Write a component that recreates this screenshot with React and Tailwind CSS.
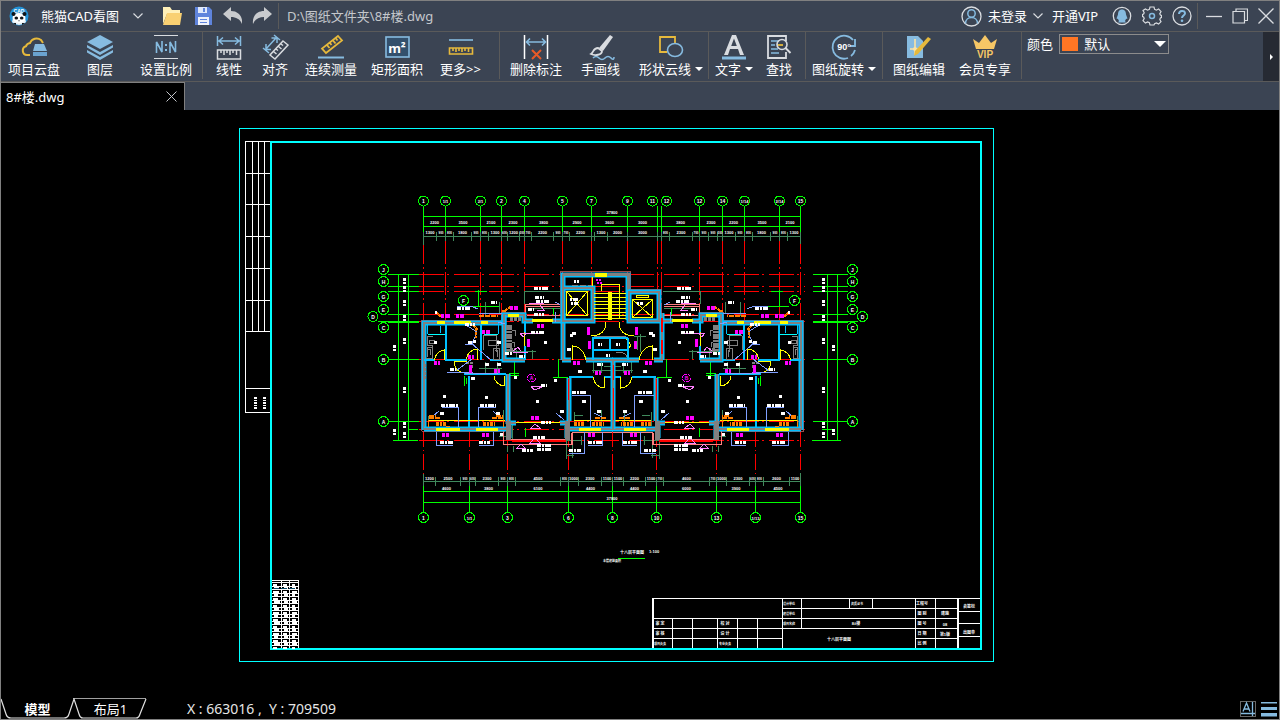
import React, { useState } from 'react';

const GREEN = '#00ff00';
const DIM = '#408a5c';
const RED = '#ff0000';
const WALL = '#00bfff';
const GRAY = '#808080';
const YELLOW = '#ffff00';
const MAGENTA = '#ff00ff';
const PURPLE = '#7f9fff';
const PINK = '#ff7fff';
const SALMON = '#ff7f7f';
const ORANGE = '#ff7f00';
const CYAN = '#00ffff';
const BLUE = '#86bbe0';
const GOLD = '#e6b93c';
const LIGHT = '#d9dce0';

// the plan is symmetric, x mirrors to AXIS - x
const AXIS = 1225;
const mirror = x => AXIS - x;

const topAxes = [
  { x: 423.5, label: '1' }, { x: 445.5, label: '1/1' }, { x: 480.5, label: '2/1' },
  { x: 501.5, label: '2' }, { x: 524.5, label: '4' }, { x: 562.5, label: '5' },
  { x: 591.5, label: '7' }, { x: 627.5, label: '9' }, { x: 657.5, cx: 652.5, label: '11' },
  { x: 661.5, cx: 666.5, label: '12' }, { x: 699.5, label: '12' }, { x: 722.5, label: '14' },
  { x: 744.5, label: '1/14' }, { x: 779.5, label: '2/14' }, { x: 800.5, label: '15' },
];

const bottomAxes = [
  { x: 423.5, label: '1' }, { x: 469.5, label: '1/1' }, { x: 507.5, label: '3' },
  { x: 568.5, label: '6' }, { x: 612.5, label: '8' }, { x: 656.5, label: '10' },
  { x: 716.5, label: '13' }, { x: 755.5, label: '1/13' }, { x: 800.5, label: '15' },
];

const sideAxes = [
  { y: 269.5, line: 274.5, label: 'J' }, { y: 281.5, line: 286.5, label: 'H' },
  { y: 296.5, line: 291.5, label: 'G' }, { y: 309.5, line: 314.5, label: 'E' },
  { y: 316.5, line: 321.5, label: 'D', out: true }, { y: 327.5, line: 322.5, label: 'C' },
  { y: 359.5, line: 359.5, label: 'B' }, { y: 421.5, line: 421.5, label: 'A' },
];

const topTicks = [423.5, 436.5, 445.5, 453.5, 471.5, 480.5, 488.5, 501.5, 507.5, 519.5, 524.5, 531.5, 553.5, 562.5, 569.5, 591.5, 594.5, 607.5, 627.5, 657.5, 661.5, 669.5, 692.5, 699.5, 708.5, 717.5, 722.5, 735.5, 744.5, 752.5, 770.5, 779.5, 787.5, 800.5];
const bottomTicks = [423.5, 435.5, 460.5, 469.5, 475.5, 498.5, 507.5, 515.5, 560.5, 568.5, 578.5, 601.5, 612.5, 623.5, 645.5, 656.5, 663.5, 709.5, 716.5, 726.5, 749.5, 755.5, 763.5, 789.5, 800.5];

const redRows = [274.5, 286.5, 291.5, 314.5, 321.5, 359.5, 421.5, 429.5, 440.5];

// short room and door labels: x, y, width
const marks = [
  [534, 288, 14], [535, 297, 9], [536, 301, 13], [528, 309, 6], [534, 314, 10],
  [457, 308, 13], [491, 302, 6], [435, 312, 2], [465, 324, 10], [434, 342, 3],
  [468, 342, 4], [497, 342, 4], [531, 332, 13], [544, 342, 3], [570, 335, 3],
  [473, 341, 3], [485, 364, 4], [497, 364, 4], [450, 369, 6], [443, 396, 3],
  [485, 397, 3], [441, 405, 17], [480, 405, 16], [440, 413, 4], [496, 413, 4],
  [514, 377, 3], [471, 378, 5], [541, 385, 6], [536, 401, 3], [541, 422, 10],
  [572, 392, 15], [582, 401, 4], [560, 411, 4], [597, 411, 5], [554, 380, 3],
  [578, 371, 4], [597, 364, 6], [440, 442, 13], [479, 442, 11], [588, 442, 14],
  [569, 450, 12], [522, 450, 11], [537, 445, 14], [537, 449, 14], [533, 437, 12],
  [500, 434, 3], [572, 333, 4], [567, 349, 5], [505, 353, 7], [519, 356, 6],
];

const pinks = [
  [441, 316, 9], [456, 316, 8], [510, 308, 8], [482, 332, 8], [537, 326, 7],
  [527, 343, 3], [434, 363, 6], [494, 371, 6], [468, 357, 6], [469, 369, 3],
  [531, 418, 8], [442, 435, 7], [482, 435, 7], [573, 363, 7], [595, 373, 6],
  [588, 435, 7], [587, 331, 3], [588, 345, 3],
];

function Tiny({ x, y, children, fill = '#fff', size = 4 }) {
  return (
    <text x={x} y={y} fill={fill} fontSize={size} fontWeight="700" textAnchor="middle" fontFamily="'Liberation Sans', 'Noto Sans CJK SC', sans-serif">
      {children}
    </text>
  );
}

function Bubble({ x, y, label }) {
  return (
    <g>
      <circle cx={x} cy={y} r="5" fill="none" stroke={GREEN} />
      <Tiny x={x} y={y + 2} size={label.length > 2 ? 4 : 5}>{label}</Tiny>
    </g>
  );
}

function DimRow({ y, stops, textY }) {
  return stops.slice(1).map((x, i) => {
    const gap = x - stops[i];
    if (gap < 5) return null;
    const value = Math.round(gap) * 100;
    return <Tiny key={`${y}-${x}`} x={(x + stops[i]) / 2} y={textY} size={gap < 10 ? 3 : 4}>{value}</Tiny>;
  });
}

function Wall({ d }) {
  return (
    <g shapeRendering="auto" fill="none">
      <path d={d} stroke={WALL} strokeWidth="5" />
      <path d={d} stroke={GRAY} strokeWidth="2" />
    </g>
  );
}

function AxisGrid() {
  return (
    <g fill="none">
      <g stroke={RED}>
        {topAxes.map(a => (
          <path key={a.x} d={`M${a.x} 241V322`} strokeDasharray="23 3 2 3" />
        ))}
        {bottomAxes.map(a => (
          <path key={a.x} d={`M${a.x} 431V476`} strokeDasharray="16 3 1 3" />
        ))}
        {redRows.map(y => (
          <path key={y} d={`M419 ${y}H805`} strokeDasharray="25 3 2 5" />
        ))}
      </g>
      <g stroke={GREEN}>
        {topAxes.map(a => (
          <path key={a.x} d={`M${a.x} 206V237`} />
        ))}
        {bottomAxes.map(a => (
          <path key={a.x} d={`M${a.x} 480V512`} />
        ))}
        <path d="M423.5 216.5H800.5M423.5 226.5H800.5M423.5 491.5H800.5M423.5 502.5H800.5" />
        {[398.5, 408.5, 827.5, 837.5].map(x => (
          <path key={x} d={`M${x} 274.5V440.5`} />
        ))}
        <path d="M393 440.5H418M408 429.5H418M812 440.5H841M822 429.5H832" />
        {sideAxes.map(a => (
          <path key={a.label} d={`M${a.out ? 378 : 388} ${a.line}H419M${a.out ? 858 : 848} ${a.line}H813`} />
        ))}
        <path d="M469 306.5H500M475 291.5H487M478.5 290V306M789 306.5H759M771 291.5H783M779.5 290V306" />
      </g>
      <g stroke={DIM}>
        <path d="M423.5 236.5H800.5M423.5 481.5H800.5M423.5 237V245M800.5 237V244M423.5 474V481M800.5 473V481" />
        {topTicks.map(x => (
          <path key={x} d={`M${x} 232V241`} />
        ))}
        {bottomTicks.map(x => (
          <path key={x} d={`M${x} 477V486`} />
        ))}
      </g>
      {topAxes.map(a => (
        <Bubble key={a.x} x={a.cx || a.x} y={201} label={a.label} />
      ))}
      {bottomAxes.map(a => (
        <Bubble key={a.x} x={a.x} y={517.5} label={a.label} />
      ))}
      {sideAxes.map(a => (
        <React.Fragment key={a.label}>
          <Bubble x={a.out ? 373 : 383.5} y={a.y} label={a.label} />
          <Bubble x={a.out ? 862.5 : 852.5} y={a.y} label={a.label} />
        </React.Fragment>
      ))}
      <Bubble x={463.5} y={300.5} label="F" />
      <Bubble x={794.5} y={300.5} label="F" />

      <Tiny x={612} y={214}>37800</Tiny>
      <DimRow y={226} stops={topAxes.map(a => a.x)} textY={224} />
      <DimRow y={236} stops={topTicks} textY={234} />
      <DimRow y={481} stops={bottomTicks} textY={480} />
      <DimRow y={491} stops={bottomAxes.map(a => a.x)} textY={490} />
      <Tiny x={612} y={500}>37800</Tiny>
      {[[404.5, 281], [404.5, 289], [404.5, 303], [404.5, 318], [404.5, 341], [394.5, 348], [404.5, 390], [404.5, 425], [404.5, 435], [394.5, 432]].map(([x, y]) => (
        <g key={`${x}-${y}`} stroke="#fff" strokeWidth="3" strokeDasharray="3 1 2 1">
          <path d={`M${x} ${y - 3}v7`} />
          <path d={`M${x < 400 ? 833.5 : 823.5} ${y - 3}v7`} />
        </g>
      ))}
    </g>
  );
}

function HalfPlan() {
  return (
    <g fill="none">
      {/* dimension strings inside the rooms */}
      <g stroke={DIM}>
        <path d="M485 302V316M499.5 302V314M524.5 291.5H562M524.5 291V304M531 308H561" />
        <path d="M479 368.5H502M485.5 362V373M497.5 362V373M502 351.5H536M532.5 350V359M516 350V358" />
        <path d="M592 370.5H620M593.5 362V373M601.5 362V373M428 416V428M503 410V428M574 412V426M601 410V428" />
        <path d="M566 435V459M572.5 436V458M566 455.5H574M560 440.5H582M507 446V452M513 446V452M552 441H562M581 436V445" />
        <path d="M512 425V440M499 436H508M575 415H583M604 366H612" />
      </g>
      <g stroke={GREEN}>
        <path d="M514.5 361V375M509 373.5H519M509 375.5H519M558.5 359V377M553 377.5H568M525.5 428V437" />
        <path d="M464.5 376V386M466.5 378V384M553.5 308V315" />
      </g>

      {/* outer face and bay windows */}
      <path d="M421.5 431V320.5H501.5V312.5H525M421.5 431.5H505" stroke="#a04848" />
      <path d="M525.5 304.5H561M525.5 306.5H561M525.5 304V320M503.5 431V444.5H571.5V433" stroke={SALMON} />
      <path d="M509 439.5H567M572.5 445V432.5H612" stroke={SALMON} />
      <path d="M512 441H566" stroke={RED} strokeWidth="2" />
      <path d="M527 315.5H561" stroke={SALMON} />

      <Wall d="M424 430V323H504V315H524V321H533" />
      <Wall d="M504 315V360H525M424 429H510M508 374V424M506 423H516M560 423H570" />
      <Wall d="M567 429H613M563 313V360M562 360H571M552 321H562M586 360H613M569 378V421" />
      <path d="M508.5 440V421M567.5 421V440" stroke={GRAY} strokeWidth="5" />
      <path d="M511.5 425V438M564.5 425V438" stroke="#0f6f8f" />
      <path d="M446 324V361M481 324V360M424 360H435M445 360H467M490 360H503M464 374H506M469 376V428M525 321V333M525 346V360M569 377H593M604 377H613" stroke={WALL} strokeWidth="2" />
      <path d="M568.5 379V400" stroke={RED} />
      <path d="M428 334.5H445M484 334.5H498" stroke={CYAN} />
      <path d="M427.5 325V334M440 325.5V333M498.500 323V334" stroke={WALL} />

      {/* windows */}
      <path d="M437 322.5H445M454 322.5H471M481 322.5H488M508 315.5H519M532 320.5H553M436 429.5H460M476 429.5H498M579 429.5H601" stroke={YELLOW} strokeWidth="3" />
      <path d="M428 420.5H505M516 422.5H560M574 420.5H612M524.5 332V346" stroke={YELLOW} />

      {/* door leaves and swings */}
      <path d="M434.5 360A11 11 0 0 1 444.5 350V360M466.5 359A11 11 0 0 1 477.5 349V360M454.5 361.5H467M454.5 361V364A10 10 0 0 0 461 372M494 376A11 11 0 0 0 504.5 386V376M572.5 360V346A14 14 0 0 1 585.5 360M593.5 377A11 11 0 0 0 604.5 388V377M591.5 336Q606 335 606 322" stroke={YELLOW} />

      {/* fittings */}
      <g stroke={GRAY}>
        <path d="M427 336.5H433M427.5 336V345H432V350M427.5 347H432V358H427ZM428 349H430V355M429 340H434V343H429Z" />
        <path d="M483 335H496V352M483 336V350M488 340H498V345H488ZM493 348H499V359H493ZM495 350H497V357" />
        <path d="M509 325V352" strokeWidth="6" strokeDasharray="5 1 2 1" />
        <path d="M510 319H522M510 350H515" strokeWidth="4" strokeDasharray="3 1" />
        <path d="M512 330H515V336M512 342H514V347" />
        <path d="M424.5 364V380M466 363H472V368" strokeWidth="2" strokeDasharray="3 1" />
      </g>
      <path d="M441.5 407.5H458.5V427M478.5 427V407.5H496M571.5 395.5H590.5V427M436.5 432V445.5H453M493.5 432V445.5H479M584.5 432V453.5H569M602.5 432V445.5H588" stroke={PURPLE} />
      <path d="M466 325L477 332L472 344L491 360M465 344.5H474M447 372.5H473M456 371L472 359M465 373H498M479 313.5H502M457 306.5H472L478 309M498 322L505 324M439 411L432 417M493 411L500 418M556 413L564 420M594 413L604 418M555 302L561 305M555 322V312" stroke={PURPLE} />
      <g stroke={ORANGE}>
        <path d="M436 424H447M483 424H495M574 424H585M592 424H604" strokeWidth="4" strokeDasharray="3 1 2 1" />
        <path d="M429 418H440M492 418H503M595 418H607M429 416H436M496 416H503M479 316H498" strokeWidth="2" strokeDasharray="5 1" />
        <path d="M436 312L442 318M476 328V338M473 325L478 330M505 311L511 306M502 311H506" strokeWidth="2" strokeDasharray="3 1" />
        <path d="M428 427V420M450 426H446M503 427V420" />
      </g>
      <path d="M520 333.5H544M520 333L523 337L527 333M531 386.5H543L535 390L531 387M513 352H528M513 351L518 347L521 351M530 428H541M531 428L535 424L540 428M517 448L521 444L525 448Z M530 443L535 438L540 443ZM529 303.5H544M537 310H544L540 305" stroke={PINK} />
    </g>
  );
}

function Core() {
  const steps = [293.5, 297.5, 301.5, 304.5, 308.5, 312.5, 315.5, 318.5];
  return (
    <g fill="none">
      <path d="M560.5 313V271.5H630.5V289.5H662" stroke="#a04848" />
      <Wall d="M563 312V275H628V320M563 288H593V321H563Z" />
      <Wall d="M629 292H659V321H629ZM613 361V429" />
      <path d="M563 274H594M608 274H628V289" stroke={GRAY} strokeWidth="3" />
      <path d="M613 365V380M613 388V420" stroke={RED} />
      <path d="M572 285H592" stroke={GRAY} strokeDasharray="6 2" />
      <path d="M595 275H607" stroke={YELLOW} strokeWidth="4" />
      <g stroke={YELLOW}>
        <path d="M566.5 291.5H587.5V315.5H566.5ZM567 292L587 315M587 292L567 315" />
        <path d="M632.5 299.5H652.5V317.5H632.5ZM633 300L652 317M652 300L633 317M636.5 295.5H648.5V297.5H636.5Z" />
        <path d="M601.5 291V284.5H619.5V319" />
        {steps.map(y => (
          <path key={y} d={`M594 ${y}H626`} />
        ))}
        <path d="M592.5 277V286M592.5 339V345M592.5 352V359M626 339L631 345L627 351" />
      </g>
      <path d="M610 292V320" stroke={YELLOW} strokeWidth="4" />
      <path d="M592 338H628M592 350H628M592.5 338V360M610 338V350M628 338V360" stroke={WALL} strokeWidth="2" />
      <path d="M594 336.5H626M616 352Q626 352 627 357" stroke={GRAY} />
      <path d="M661.5 318V360" stroke={RED} strokeWidth="2" strokeDasharray="14 8" />
      <g stroke="#fff" strokeWidth="3" strokeDasharray="2 1 5 1">
        <path d="M570 299H578M571 303H578M637 303H643M574 281H579M598 344H602M616 344H620M606 355H610" />
      </g>
      <path d="M596 280H602M597 283H602" stroke={MAGENTA} strokeWidth="2" strokeDasharray="2 1" />
      <path d="M634 336H646M640 334V352M637 337V350" stroke={DIM} />
    </g>
  );
}

function Marks() {
  return (
    <g fill="none" strokeWidth="3">
      {marks.map(([x, y, w]) => (
        <g key={`${x}-${y}`} stroke="#fff" strokeDasharray="4 1 2 1 6 1">
          <path d={`M${x} ${y}h${w}`} />
          <path d={`M${mirror(x) - w} ${y}h${w}`} />
        </g>
      ))}
      {pinks.map(([x, y, w]) => (
        <g key={`${x}-${y}`} stroke={MAGENTA} strokeWidth={w < 4 ? 8 : 4} strokeDasharray="3 1 5 1">
          <path d={`M${x} ${y}h${w}`} />
          <path d={`M${mirror(x) - w} ${y}h${w}`} />
        </g>
      ))}
      {[531.5, 686.5].map((x, i) => (
        <g key={x}>
          <circle cx={x} cy="378" r="4" stroke={MAGENTA} strokeWidth="1" strokeDasharray="3 1" />
          <Tiny x={x} y={380} fill={MAGENTA} size={5}>{i ? 'B' : 'A'}</Tiny>
        </g>
      ))}
    </g>
  );
}

function TitleBlock() {
  const labels = [
    [789, 605, '设计单位'], [789, 615, '建设单位'], [789, 625, '项目名称'], [857, 605, '资质证书'],
    [856, 625, '8#楼'], [922, 605, '工程号'], [922, 615, '图 别'], [922, 625, '图 号'],
    [922, 635, '日 期'], [922, 645, '比 例'], [945, 615, '建施'], [945, 626, '08'], [945, 636, '第1版'],
    [660, 625, '审 定'], [660, 635, '审 核'], [660, 645, '项目负责'], [725, 625, '校 对'],
    [725, 635, '设 计'], [725, 645, '专业负责'], [969, 608, '会签栏'], [969, 634, '出图章'],
  ];
  return (
    <g fill="none">
      <g stroke="#fff">
        <path d="M653 598V648M958 598V648" strokeWidth="2" />
        <path d="M653 598.5H980M653 618.5H958M782 608.5H958M653 628.5H958M653 638.5H782M915 638.5H958M958 611.5H980M958 623.5H980M958 636.5H980" />
        <path d="M782.5 598V648M801.5 598V628M849.5 598V608M872.5 598V608M915.5 598V648M935.5 598V648" />
        <path d="M672.5 618V648M692.5 618V648M717.5 618V648M737.5 618V648M757.5 618V648" />
      </g>
      {labels.map(([x, y, t]) => (
        <Tiny key={`${x}-${y}`} x={x} y={y} size={t.length > 3 ? 3 : 4}>{t}</Tiny>
      ))}
      <Tiny x={839} y={641}>十八层平面图</Tiny>
    </g>
  );
}

function Legend() {
  const rows = Array.from({ length: 19 }, (_, i) => 582.5 + i * 3.5);
  return (
    <g fill="none" stroke="#fff">
      <path d="M272 580.5H298.5V648M281.5 580V648M289.5 580V648" />
      {rows.map((y, i) => (
        <g key={y}>
          <path d={`M272 ${y}H298`} />
          <path d={`M${273 + (i % 2)} ${y + 2}h${4 + (i % 3)}M${283 + (i % 2)} ${y + 2}h4M292 ${y + 2}h${3 + (i % 3)}`} strokeWidth="2" />
        </g>
      ))}
      <path d="M273 588.5H297" stroke="#0b4a66" strokeDasharray="6 2" />
    </g>
  );
}

function Drawing() {
  return (
    <svg className="block h-full w-full" viewBox="1 110 1278 588" shapeRendering="crispEdges" role="img" aria-label="8#楼">
      <rect x="239.5" y="128.5" width="754" height="533" fill="none" stroke={CYAN} />
      <rect x="271" y="142" width="710" height="507" fill="none" stroke={CYAN} strokeWidth="2" />

      {/* signature strip */}
      <g fill="none" stroke="#fff">
        <path d="M270 141.5H245.5V412.5H270M252.5 141V331M258.5 141V331M264.5 141V331" />
        <path d="M245 173.5H270M245 204.5H270M245 236.5H270M245 268.5H270M245 300.5H270M245 331.5H270M245 388.5H270" />
        <path d="M255.5 397V409M264.5 397V409" strokeWidth="3" strokeDasharray="2 1 1 1" />
      </g>

      <AxisGrid />
      <HalfPlan />
      <g transform={`translate(${AXIS} 0) scale(-1 1)`}>
        <HalfPlan />
      </g>
      <Core />
      <Marks />

      <Tiny x={632} y={554}>十八层平面图</Tiny>
      <Tiny x={654} y={553}>1:100</Tiny>
      <path d="M618 558.5H645" stroke={GREEN} />
      <Tiny x={612} y={562} size={3}>本层建筑面积</Tiny>

      <TitleBlock />
      <Legend />
    </svg>
  );
}

const icons = {
  cloud: (
    <>
      <path d="M9 20H6a4.500 4.500 0 0 1-1-8.800A5 5 0 0 1 9 8 7 7 0 0 1 20 5l2 3" fill="none" stroke={GOLD} strokeWidth="2" />
      <path d="M14 9h9l3 7H12z" fill={BLUE} />
      <path d="M12 17h14v4H12z" fill="#6aa3d0" />
    </>
  ),
  layers: (
    <g fill={BLUE}>
      <path d="M13 0L26 7 13 14 0 7z" />
      <path d="M0 10l13 7 13-7v2.500L13 20 0 12.500z" />
      <path d="M0 15l13 7 13-7v2.500L13 25 0 17.500z" />
    </g>
  ),
  scale: (
    <>
      <path d="M1 .5h24M1 23.500h24" stroke={LIGHT} />
      <path d="M3.500 18V7L9 17V6M17 18V7L22.500 17V6" fill="none" stroke={BLUE} strokeWidth="1.600" />
      <path d="M12 9h2v2h-2zM12 14h2v2h-2z" fill={BLUE} />
    </>
  ),
  linear: (
    <>
      <path d="M1.500 1v10M24.500 1v10M2 6h22M7 2.500L3 6l4 3.500M19 2.500L23 6l-4 3.500" fill="none" stroke={BLUE} strokeWidth="1.500" />
      <path d="M1.500 15h23v9h-23zM5 15v3M8 15v5M11 15v3M14 15v5M17 15v3M20.500 15v5" fill="none" stroke={LIGHT} strokeWidth="1.500" />
    </>
  ),
  align: (
    <>
      <path d="M1 13l6 5M12 0l6 5M4 14L14 3M4 9v5.500h5M9.500 3H15v5" fill="none" stroke={BLUE} strokeWidth="1.500" />
      <path d="M21 6l5 4-13 14-5-4zM19 9l2 1.500M16.500 11.500l3 2.500M14 14l2 1.500M11.500 16.500l3 2.500" fill="none" stroke={LIGHT} strokeWidth="1.500" />
    </>
  ),
  measure: (
    <>
      <path d="M20 1l4 4.500L8 18l-4-4.500zM18 3.500l1.500 2M15 5.500l2.500 3M12 8l1.500 2M9 10l2.500 3" fill="none" stroke={GOLD} strokeWidth="1.800" />
      <path d="M0 22.500h26" stroke={BLUE} strokeWidth="2" />
    </>
  ),
  area: (
    <>
      <rect x="2" y="2" width="23" height="20" fill="#33506c" stroke={BLUE} strokeWidth="1.600" />
      <text x="13" y="18" fill="#fff" fontSize="13" fontWeight="700" textAnchor="middle" fontFamily="'Noto Sans', sans-serif">m²</text>
    </>
  ),
  more: (
    <>
      <path d="M1 5h24" stroke={BLUE} strokeWidth="1.600" />
      <path d="M1.500 13h23v6h-23zM5 13v3M8 13v4M11 13v3M14 13v4M17 13v3M20.500 13v4" fill="none" stroke={GOLD} strokeWidth="1.600" />
    </>
  ),
  remove: (
    <>
      <path d="M1.500 0v24M24.500 0v24" stroke="#fff" strokeWidth="1.500" />
      <path d="M3 7h20M7 3.500L3.500 7 7 10.500M19 3.500L22.500 7 19 10.500" fill="none" stroke={BLUE} strokeWidth="1.600" />
      <path d="M9 15l9 9M18 15l-9 9" stroke="#e85a28" strokeWidth="2" />
    </>
  ),
  brush: (
    <>
      <path d="M22 0l3 2-10 14-4-3z" fill={LIGHT} />
      <path d="M10 13c-5 0-4 4-7 6 4 2 11 1 11-3z" fill="none" stroke={LIGHT} strokeWidth="1.800" />
      <path d="M5 23q3-3 6 0t6 0 6 0 3-1" fill="none" stroke={BLUE} strokeWidth="1.600" />
    </>
  ),
  shapes: (
    <>
      <path d="M9 17H2V2h15v7" fill="none" stroke={GOLD} strokeWidth="1.800" />
      <ellipse cx="17" cy="15" rx="7.500" ry="6.500" fill="none" stroke={BLUE} strokeWidth="1.600" />
    </>
  ),
  text: (
    <>
      <path d="M3 20L11 0h4l8 20h-4l-2-6H9l-2 6zM10.200 11h5.600L13 3.500z" fill={LIGHT} />
      <path d="M1 21.500h24v3H1z" fill={BLUE} />
    </>
  ),
  search: (
    <>
      <path d="M20 6V1H2v22h18v-6" fill="none" stroke={LIGHT} strokeWidth="1.800" />
      <path d="M5 6h8M5 10h4M5 14h7M5 18h8" stroke={BLUE} strokeWidth="1.600" />
      <path d="M11 10h6" stroke={GOLD} strokeWidth="1.800" />
      <circle cx="16" cy="9.500" r="5" fill="none" stroke={LIGHT} strokeWidth="1.600" />
      <path d="M19.500 13l5 5" stroke={LIGHT} strokeWidth="2" />
    </>
  ),
  rotate: (
    <>
      <path d="M22 5A11.500 11.500 0 1 0 17 23M20 21a11.500 11.500 0 0 0 4-6M24 4v7h-5" fill="none" stroke={BLUE} strokeWidth="1.800" />
      <text x="13" y="15" fill="#fff" fontSize="9" fontWeight="700" textAnchor="middle" fontFamily="'Liberation Sans', sans-serif">90°</text>
    </>
  ),
  edit: (
    <>
      <path d="M1 1h11l5 5v17H1z" fill={BLUE} />
      <path d="M9 4v16M4 14h12" stroke="#fbe3a4" strokeWidth="1.600" />
      <circle cx="9" cy="14" r="2" fill="#fbe3a4" />
      <path d="M22 2l3 2-13 15-4 2 1-5z" fill={GOLD} />
    </>
  ),
  vip: (
    <>
      <path d="M1 4l6 4 6-8 6 8 6-4-3 10H4z" fill="#f6c766" />
      <text x="13" y="23" fill="#f6c766" fontSize="10" fontWeight="700" textAnchor="middle" fontFamily="'Liberation Sans', sans-serif">VIP</text>
    </>
  ),
};

const groups = [
  { className: 'gap-[24px] pl-[7px] pr-[10px]', tools: [['cloud', '项目云盘'], ['layers', '图层'], ['scale', '设置比例']] },
  { className: 'gap-[14px] pl-[10px] pr-[15px]', tools: [['linear', '线性'], ['align', '对齐'], ['measure', '连续测量'], ['area', '矩形面积'], ['more', '更多>>']] },
  { className: 'gap-[16px] pl-[10px] pr-[5px]', tools: [['remove', '删除标注'], ['brush', '手画线'], ['shapes', '形状云线', true]] },
  { className: 'gap-[10px] pl-[6px] pr-[10px]', tools: [['text', '文字', true], ['search', '查找']] },
  { className: 'pl-[6px] pr-[6px]', tools: [['rotate', '图纸旋转', true]] },
  { className: 'gap-[14px] pl-[10px] pr-[10px]', tools: [['edit', '图纸编辑'], ['vip', '会员专享']] },
];

function Tool({ icon, label, menu }) {
  const padded = label.length < 4 && !menu;
  return (
    <button type="button" className={`flex shrink-0 flex-col items-center pt-[3px] ${padded || icon === 'more' ? 'px-[3px]' : ''}`}>
      <svg className="block h-[26px] w-[26px] overflow-visible" viewBox="0 0 26 26">{icons[icon]}</svg>
      <span className="flex items-center gap-1 whitespace-nowrap text-[13px] leading-4">
        {label}
        {menu && (
          <svg className="h-1 w-2" viewBox="0 0 8 4"><path d="M0 0h8L4 4z" fill="#fff" /></svg>
        )}
      </span>
    </button>
  );
}

function Chevron() {
  return (
    <svg className="h-[6px] w-[10px] shrink-0" viewBox="0 0 10 6">
      <path d="M.5 .5L5 5 9.500 .5" fill="none" stroke="#d9dce0" strokeWidth="1.200" />
    </svg>
  );
}

function TitleBar() {
  return (
    <header className="flex h-[31px] shrink-0 items-center border-b border-[#5a5a5a] pl-2 pr-[5px] text-[13px] leading-5">
      <svg className="h-5 w-5 shrink-0" viewBox="0 0 20 20">
        <circle cx="10" cy="10" r="9.500" fill="#2492d6" />
        <text x="10" y="6.500" fill="#fff" fontSize="5" fontWeight="700" textAnchor="middle" fontFamily="'Liberation Sans', sans-serif">CAD</text>
        <path d="M3 16a7 6 0 0 1 14 0 9.500 9.500 0 0 1-14 0z" fill="#e8eef3" />
        <ellipse cx="10" cy="12" rx="6.500" ry="5" fill="#fff" />
        <circle cx="4.500" cy="8" r="2" fill="#101418" />
        <circle cx="15.500" cy="8" r="2" fill="#101418" />
        <ellipse cx="7.300" cy="12" rx="1.800" ry="1.500" fill="#101418" />
        <ellipse cx="12.700" cy="12" rx="1.800" ry="1.500" fill="#101418" />
        <path d="M9 14.500h2l-1 1zM4 17h3v2zM16 17h-3v2z" fill="#101418" />
      </svg>
      <button type="button" className="ml-3 flex items-center gap-[14px] whitespace-nowrap">
        熊猫CAD看图
        <Chevron />
      </button>
      <div className="ml-[19px] flex items-center gap-[10px]">
        <button type="button" aria-label="打开">
          <svg className="block h-[18px] w-5" viewBox="0 0 20 18">
            <path d="M1 0h7l2 3h8v4H5L1 17z" fill="#fff0b8" />
            <path d="M5 6h15l-2 12H1z" fill="#f9d072" />
          </svg>
        </button>
        <button type="button" aria-label="保存">
          <svg className="block h-[18px] w-5" viewBox="0 0 20 18">
            <path d="M3 0h14l3 3v15H3z" fill="#5f84dc" />
            <path d="M6 0h9v6H6z" fill="#dfe8fa" />
            <path d="M11 1h2v4h-2z" fill="#5f84dc" />
            <path d="M6 10h11v8H6z" fill="#eef2fb" />
            <path d="M8 12.500h7M8 15.500h7" stroke="#5f84dc" />
          </svg>
        </button>
        <button type="button" aria-label="撤销">
          <svg className="block h-[18px] w-5" viewBox="0 0 20 18">
            <path d="M1 7l8-7v4c7 0 12 5 11 13-2-5-6-7-11-7v4z" fill="#c9cbce" />
          </svg>
        </button>
        <button type="button" aria-label="重做">
          <svg className="block h-[18px] w-5" viewBox="0 0 20 18">
            <path d="M20 7l-8-7v4C5 4 0 9 1 17c2-5 6-7 11-7v4z" fill="#c9cbce" />
          </svg>
        </button>
      </div>
      <div className="ml-[6px] h-[26px] w-px bg-[#5a5a5a]" />
      <span className="ml-2 whitespace-nowrap text-[#c4c7cc]">D:\图纸文件夹\8#楼.dwg</span>

      <div className="ml-auto flex shrink-0 items-center">
        <button type="button" className="flex items-center gap-[6px] whitespace-nowrap">
          <svg className="h-[21px] w-[21px]" viewBox="0 0 21 21" fill="none">
            <circle cx="10.500" cy="10.500" r="9.500" stroke={LIGHT} strokeWidth="1.300" />
            <circle cx="10.500" cy="7.500" r="3.700" stroke={BLUE} strokeWidth="1.500" />
            <path d="M4.500 17.500c0-8 12-8 12 0" stroke={BLUE} strokeWidth="1.500" />
          </svg>
          未登录
          <Chevron />
        </button>
        <button type="button" className="ml-[9px] whitespace-nowrap">开通VIP</button>
        <div className="ml-[14px] flex items-center gap-[10px]">
          <button type="button" aria-label="客服">
            <svg className="block h-5 w-5" viewBox="0 0 20 20">
              <circle cx="10" cy="10" r="8.700" fill="none" stroke={LIGHT} strokeWidth="1.300" />
              <path d="M10 3.500c3 0 4 2.500 4 5l1.500 4-1.500.5-1 2 1 1.500H6L7 15l-1-2-1.500-.5L6 8.500c0-2.500 1-5 4-5z" fill={BLUE} />
            </svg>
          </button>
          <button type="button" aria-label="设置">
            <svg className="block h-5 w-5" viewBox="0 0 20 20" fill="none">
              <path d="M8 1h4l.6 2.400 1.800.8 2.200-1.300 2.400 2.600-1.200 2.200.6 1.300 1.100.4v2.200l-1.100.4-.6 1.500 1.200 2.200-2.400 2.400-2.200-1.200-1.800.7L12 19H8l-.6-2.400-1.800-.7-2.200 1.200L1 14.700l1.200-2.200-.6-1.500L.5 10.600V8.400l1.100-.4.600-1.300L1 4.500l2.400-1.600 2.200 1.300 1.800-.8z" stroke={LIGHT} strokeWidth="1.200" />
              <circle cx="10" cy="10" r="2.500" stroke={BLUE} strokeWidth="1.500" />
            </svg>
          </button>
          <button type="button" aria-label="帮助">
            <svg className="block h-5 w-5" viewBox="0 0 20 20">
              <circle cx="10" cy="10" r="9" fill="none" stroke={LIGHT} strokeWidth="1.300" />
              <path d="M7 8c0-4 6-4 6-.8C13 9.500 10 9.500 10 12" fill="none" stroke={BLUE} strokeWidth="2" />
              <circle cx="10" cy="14.800" r="1.300" fill={BLUE} />
            </svg>
          </button>
        </div>
        <div className="ml-[5px] h-[26px] w-px bg-[#5a5a5a]" />
        <div className="ml-2 flex items-center gap-[10px]">
          <button type="button" aria-label="最小化">
            <svg className="block h-4 w-4" viewBox="0 0 16 16"><path d="M0 8.500h16" stroke={LIGHT} strokeWidth="1.300" /></svg>
          </button>
          <button type="button" aria-label="还原">
            <svg className="block h-4 w-4" viewBox="0 0 16 16" fill="none" stroke={LIGHT} strokeWidth="1.200">
              <path d="M1 3.500h11.500V15H1zM4 3V1h11.500v11.500h-3" />
            </svg>
          </button>
          <button type="button" aria-label="关闭">
            <svg className="block h-4 w-4" viewBox="0 0 16 16"><path d="M.5 .5l15 15M15.500 .5l-15 15" stroke={LIGHT} strokeWidth="1.300" /></svg>
          </button>
        </div>
      </div>
    </header>
  );
}

function Toolbar() {
  const [color, setColor] = useState('default');

  return (
    <nav className="flex h-[50px] shrink-0 border-b border-[#5a5a5a]">
      {groups.map((g, i) => (
        <div key={i} className="flex shrink-0">
          <div className={`flex items-start ${g.className}`}>
            {g.tools.map(([icon, label, menu]) => (
              <Tool key={label} icon={icon} label={label} menu={menu} />
            ))}
          </div>
          <div className="h-[47px] w-px bg-[#5a5a5a]" />
        </div>
      ))}
      <div className="flex items-start gap-[6px] pl-[5px] pt-[2px] text-[13px]">
        <label htmlFor="color" className="whitespace-nowrap leading-[20px]">颜色</label>
        <div className="relative">
          <select
            id="color"
            value={color}
            onChange={e => setColor(e.target.value)}
            className="block h-5 w-[110px] appearance-none border border-[#8c8c8c] bg-[#3b4453] pl-6 text-[13px] leading-[18px] text-white outline-none"
          >
            <option value="default">默认</option>
          </select>
          <span className="pointer-events-none absolute left-[3px] top-[3px] h-[14px] w-4 bg-[#ff7624]" />
          <svg className="pointer-events-none absolute right-[3px] top-[7px] h-[6px] w-3" viewBox="0 0 12 6"><path d="M0 0h12L6 6z" fill="#fff" /></svg>
        </div>
      </div>
      <button type="button" aria-label="展开" className="ml-auto flex w-4 items-center justify-center bg-[#262a33]">
        <svg className="h-[6px] w-[3px]" viewBox="0 0 3 6"><path d="M0 0l3 3-3 3z" fill="#fff" /></svg>
      </button>
    </nav>
  );
}

function StatusBar() {
  return (
    <footer className="flex h-[21px] shrink-0 items-center pr-[2px] text-[13px]">
      <div className="relative flex h-full w-[146px] shrink-0">
        <svg className="absolute inset-0 h-full w-full" viewBox="0 0 146 21" fill="none">
          <path d="M72 .5h73" stroke="#a0a0a0" />
          <path d="M0 1l5 15q1 4 5 4h53q4 0 5-4l5-15 5 15q1 4 4 4h53q3 0 4-4l6-15" stroke="#e0e0e0" strokeWidth="1.200" />
        </svg>
        <button type="button" className="relative h-full w-[73px] font-bold leading-5">模型</button>
        <button type="button" className="relative h-full w-[73px] leading-5">布局1</button>
      </div>
      <span className="ml-10 whitespace-pre text-sm leading-5 text-[#e6e6e6]">X : 663016 ,  Y : 709509</span>
      <div className="ml-auto flex items-center gap-[5px]">
        <button type="button" aria-label="文字显示">
          <svg className="block h-4 w-4" viewBox="0 0 16 16" fill="none">
            <rect x=".5" y=".5" width="15" height="15" stroke="#666" />
            <path d="M3 10.500L6.500 2l3.500 8.500M4.500 8h4M12.500 1v14M1 12.500h14" stroke={BLUE} strokeWidth="1.300" />
          </svg>
        </button>
        <button type="button" aria-label="菜单">
          <svg className="block h-4 w-4" viewBox="0 0 16 16"><path d="M0 1h16v1.500H0zM0 6h16v3H0zM0 12h16v3.500H0z" fill={BLUE} /></svg>
        </button>
      </div>
    </footer>
  );
}

export default function App() {
  return (
    <div className="flex h-screen flex-col overflow-hidden border border-[#808080] bg-[#3b4453] font-['Noto_Sans','Noto_Sans_CJK_SC',sans-serif] text-white">
      <TitleBar />
      <Toolbar />
      <div className="flex h-7 shrink-0">
        <div className="flex w-[184px] items-center justify-between border-r border-t border-[#808080] bg-black pl-[5px] pr-[7px] text-[13px] leading-5">
          <span>8#楼.dwg</span>
          <button type="button" aria-label="关闭图纸">
            <svg className="block h-[11px] w-[11px]" viewBox="0 0 11 11"><path d="M.5 .5l10 10M10.500 .5l-10 10" stroke="#c4c7cc" /></svg>
          </button>
        </div>
      </div>
      <main className="flex min-h-0 flex-1 flex-col bg-black">
        <div className="min-h-0 flex-1">
          <Drawing />
        </div>
        <StatusBar />
      </main>
    </div>
  );
}
